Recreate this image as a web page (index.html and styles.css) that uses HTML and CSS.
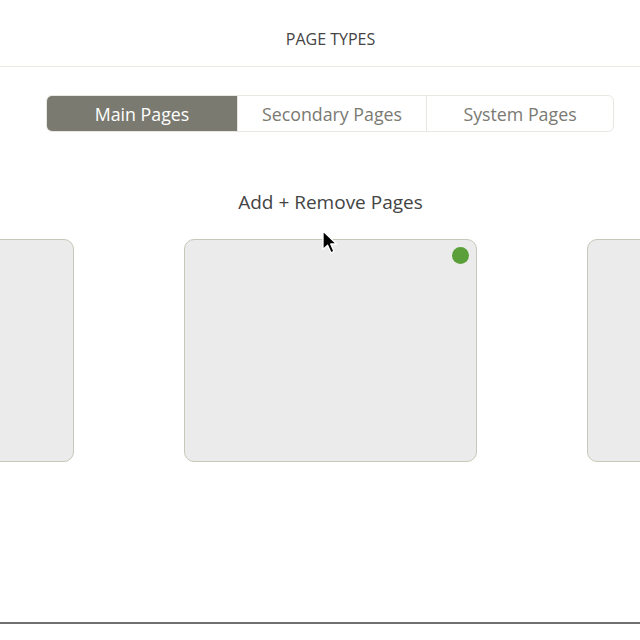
FILE: index.html
```html
<!DOCTYPE html>
<html>
<head>
<meta charset="utf-8">
<link rel="stylesheet" href="styles.css">
</head>
<body>
<div class="page">
  <header class="header"><h1 class="header-title">PAGE TYPES</h1></header>
  <main class="main">
    <nav class="tabs">
      <div class="tab tab-active">Main Pages</div>
      <div class="tab">Secondary Pages</div>
      <div class="tab">System Pages</div>
    </nav>
    <h2 class="section-title">Add + Remove Pages</h2>
    <div class="cards">
      <div class="card"></div>
      <div class="card card-current"><span class="dot"></span></div>
      <div class="card"></div>
    </div>
  </main>
  <div class="bottom-line"></div>
  <svg class="cursor" width="16" height="24" viewBox="0 0 16 24">
    <path d="M1 1 L1 19.5 L5.6 15.2 L9 22.8 L12 21.4 L8.7 14 L14.6 14 Z" fill="#000" stroke="#fff" stroke-width="1.3" stroke-linejoin="round"/>
  </svg>
</div>
</body>
</html>
```
FILE: styles.css
```css
* { box-sizing: border-box; }
html, body { margin: 0; padding: 0; background: #fff; }
body { font-family: "Open Sans", "Liberation Sans", sans-serif; color: #444; }
.page { position: relative; width: 640px; height: 640px; overflow: hidden; }
.header {
  height: 67px;
  border-bottom: 1px solid #ebe9e2;
  display: flex;
  align-items: center;
  justify-content: center;
  padding-left: 21px;
  padding-top: 11px;
}
.header-title { margin: 0; font-size: 16px; font-weight: 400; color: #444; line-height: 22px; }
.main { padding-left: 21px; }
.tabs {
  margin: 28px 26px 0 25px;
  height: 37px;
  display: flex;
  border: 1px solid #e8e7e1;
  border-radius: 6px;
  overflow: hidden;
}
.tab {
  flex: 0 0 auto;
  display: flex;
  align-items: center;
  justify-content: center;
  font-size: 17.8px;
  color: #7a7a72;
  border-left: 1px solid #e8e7e1;
}
.tab:nth-child(1) { width: 190px; border-left: none; }
.tab:nth-child(2) { width: 189px; }
.tab:nth-child(3) { flex: 1 1 auto; }
.tab-active { background: #7a7a70; color: #fff; }
.section-title {
  margin: 55px 0 0;
  text-align: center;
  font-size: 19px;
  font-weight: 400;
  color: #444;
  line-height: 30px;
}
.cards {
  margin-top: 22px;
  display: flex;
  justify-content: center;
  gap: 110px;
}
.card {
  flex: 0 0 293px;
  height: 223px;
  background: #ebebeb;
  border: 1px solid #c9c7b9;
  border-radius: 10px;
  position: relative;
}
.dot {
  position: absolute;
  top: 7px;
  right: 7px;
  width: 17px;
  height: 17px;
  border-radius: 50%;
  background: #5a9f3a;
}
.bottom-line {
  position: absolute;
  left: 0;
  right: 0;
  top: 622px;
  height: 2px;
  background: #6f6f6f;
}
.cursor { position: absolute; left: 322px; top: 230px; }
```
